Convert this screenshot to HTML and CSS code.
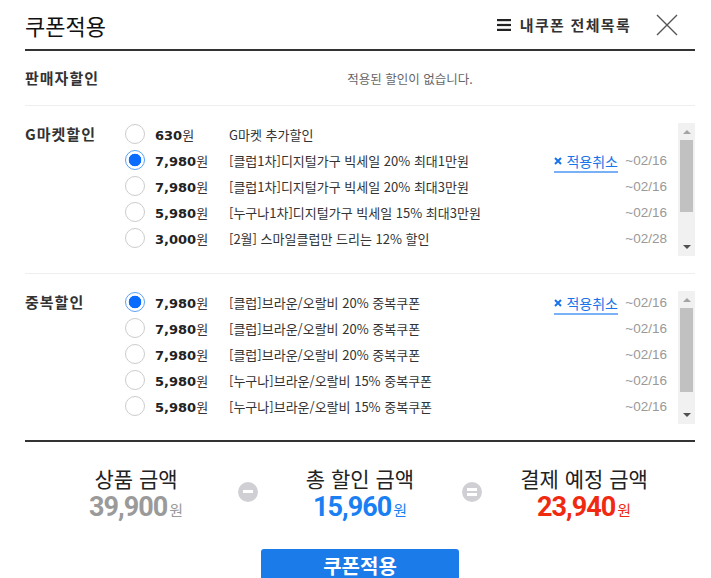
FILE: index.html
```html
<!DOCTYPE html>
<html lang="ko">
<head>
  <meta charset="UTF-8">
  <title>쿠폰적용</title>
  <link rel="stylesheet" href="styles.css">
</head>
<body>
  <div class="popup">
    <div class="header">
      <h1 class="title">쿠폰적용</h1>
      <a class="my-coupons" href="#">
        <svg class="menu-icon" width="14" height="12" viewBox="0 0 14 12"><rect x="0" y="0" width="14" height="2.2" fill="#222"/><rect x="0" y="4.9" width="14" height="2.2" fill="#222"/><rect x="0" y="9.8" width="14" height="2.2" fill="#222"/></svg>
        내쿠폰 전체목록
      </a>
      <a class="close" href="#">
        <svg width="22" height="22" viewBox="0 0 22 22"><path d="M1 1 L21 21 M21 1 L1 21" stroke="#555" stroke-width="1.4" fill="none"/></svg>
      </a>
    </div>

    <div class="seller-row">
      <div class="sec-label">판매자할인</div>
      <div class="empty">적용된 할인이 없습니다.</div>
    </div>

    <div class="coupon-sec">
      <div class="sec-label">G마켓할인</div>
      <ul class="coupon-list">
        <li class="coupon-row">
          <input type="radio" class="radio" name="gmarket">
          <span class="amount"><b>630</b>원</span>
          <span class="desc">G마켓 추가할인</span>
          <span class="date"></span>
        </li>
        <li class="coupon-row">
          <input type="radio" class="radio" name="gmarket" checked>
          <span class="amount"><b>7,980</b>원</span>
          <span class="desc">[클럽1차]디지털가구 빅세일 20% 최대1만원</span>
          <a class="cancel" href="#"><svg class="x" width="8" height="8" viewBox="0 0 8 8"><path d="M1 1 L7 7 M7 1 L1 7" stroke="#1a73e8" stroke-width="2" fill="none"/></svg>적용취소</a>
          <span class="date">~02/16</span>
        </li>
        <li class="coupon-row">
          <input type="radio" class="radio" name="gmarket">
          <span class="amount"><b>7,980</b>원</span>
          <span class="desc">[클럽1차]디지털가구 빅세일 20% 최대3만원</span>
          <span class="date">~02/16</span>
        </li>
        <li class="coupon-row">
          <input type="radio" class="radio" name="gmarket">
          <span class="amount"><b>5,980</b>원</span>
          <span class="desc">[누구나1차]디지털가구 빅세일 15% 최대3만원</span>
          <span class="date">~02/16</span>
        </li>
        <li class="coupon-row">
          <input type="radio" class="radio" name="gmarket">
          <span class="amount"><b>3,000</b>원</span>
          <span class="desc">[2월] 스마일클럽만 드리는 12% 할인</span>
          <span class="date">~02/28</span>
        </li>
      </ul>
      <div class="scrollbar">
        <span class="arrow-up off"></span>
        <span class="thumb thumb-g"></span>
        <span class="arrow-down"></span>
      </div>
    </div>

    <div class="coupon-sec last">
      <div class="sec-label">중복할인</div>
      <ul class="coupon-list">
        <li class="coupon-row">
          <input type="radio" class="radio" name="dup" checked>
          <span class="amount"><b>7,980</b>원</span>
          <span class="desc">[클럽]브라운/오랄비 20% 중복쿠폰</span>
          <a class="cancel" href="#"><svg class="x" width="8" height="8" viewBox="0 0 8 8"><path d="M1 1 L7 7 M7 1 L1 7" stroke="#1a73e8" stroke-width="2" fill="none"/></svg>적용취소</a>
          <span class="date">~02/16</span>
        </li>
        <li class="coupon-row">
          <input type="radio" class="radio" name="dup">
          <span class="amount"><b>7,980</b>원</span>
          <span class="desc">[클럽]브라운/오랄비 20% 중복쿠폰</span>
          <span class="date">~02/16</span>
        </li>
        <li class="coupon-row">
          <input type="radio" class="radio" name="dup">
          <span class="amount"><b>7,980</b>원</span>
          <span class="desc">[클럽]브라운/오랄비 20% 중복쿠폰</span>
          <span class="date">~02/16</span>
        </li>
        <li class="coupon-row">
          <input type="radio" class="radio" name="dup">
          <span class="amount"><b>5,980</b>원</span>
          <span class="desc">[누구나]브라운/오랄비 15% 중복쿠폰</span>
          <span class="date">~02/16</span>
        </li>
        <li class="coupon-row">
          <input type="radio" class="radio" name="dup">
          <span class="amount"><b>5,980</b>원</span>
          <span class="desc">[누구나]브라운/오랄비 15% 중복쿠폰</span>
          <span class="date">~02/16</span>
        </li>
      </ul>
      <div class="scrollbar">
        <span class="arrow-up off"></span>
        <span class="thumb thumb-d"></span>
        <span class="arrow-down"></span>
      </div>
    </div>

    <div class="summary">
      <div class="sum-col">
        <div class="sum-label">상품 금액</div>
        <div class="sum-value gray">39,900<small>원</small></div>
      </div>
      <span class="op minus"></span>
      <div class="sum-col">
        <div class="sum-label">총 할인 금액</div>
        <div class="sum-value blue">15,960<small>원</small></div>
      </div>
      <span class="op equals"></span>
      <div class="sum-col">
        <div class="sum-label">결제 예정 금액</div>
        <div class="sum-value red">23,940<small>원</small></div>
      </div>
    </div>

    <button class="apply-btn" type="button">쿠폰적용</button>
  </div>
</body>
</html>
```

FILE: styles.css
```css
body { margin: 0; background: #fff; color: #333; font-family: "Noto Sans CJK KR", sans-serif; }
a { text-decoration: none; color: inherit; }
.popup { padding: 0 16px 0 25px; }

.header { display: flex; align-items: center; height: 49px; border-bottom: 2px solid #333; }
.title { margin: 0; font-size: 22px; font-weight: 400; color: #111; }
.my-coupons { margin-left: auto; display: flex; align-items: center; gap: 9px; font-size: 15px; font-weight: bold; letter-spacing: 1.3px; color: #333; }
.close { display: flex; margin-left: 25px; margin-right: 17px; }

.seller-row { display: flex; align-items: center; height: 54px; border-bottom: 1px solid #eee; }
.sec-label { width: 100px; flex-shrink: 0; font-size: 15px; font-weight: bold; letter-spacing: 1px; line-height: 26px; color: #333; }
.empty { flex: 1; text-align: center; font-size: 12.5px; color: #666; }

.coupon-sec { display: flex; align-items: flex-start; padding: 15px 0 17px; border-bottom: 1px solid #eee; }
.coupon-sec.last { padding-bottom: 16px; border-bottom: 2px solid #333; }
.coupon-list { flex: 1; list-style: none; margin: 0; padding: 0 11px 0 0; }
.coupon-row { display: flex; align-items: center; height: 26px; }
.radio { appearance: none; -webkit-appearance: none; margin: 0; width: 20px; height: 20px; border: 1px solid #ccc; border-radius: 50%; background: #fff; flex-shrink: 0; }
.radio:checked { border-color: #5aa2f5; background: radial-gradient(circle, #0a6cff 0, #0a6cff 6px, #fff 6.6px); }
.amount { width: 74px; margin-left: 10px; flex-shrink: 0; font-size: 13px; color: #333; }
.amount b { font-family: "DejaVu Sans", sans-serif; font-size: 13px; color: #222; }
.desc { flex: 1; font-size: 13px; color: #333; white-space: nowrap; }
.cancel { display: inline-flex; align-items: center; gap: 4px; margin-right: 7px; margin-top: 3px; font-size: 14px; line-height: 20px; color: #1a73e8; border-bottom: 2px solid #7ab0f5; }
.date { width: 42px; text-align: right; font-family: "Liberation Sans", sans-serif; font-size: 13.5px; color: #999; }

.scrollbar { width: 17px; height: 133px; margin-top: 2px; background: #f1f1f1; display: flex; flex-direction: column; align-items: center; flex-shrink: 0; }
.arrow-up, .arrow-down { width: 0; height: 0; border-left: 4px solid transparent; border-right: 4px solid transparent; }
.arrow-up { margin-top: 7px; border-bottom: 4px solid #505050; }
.arrow-up.off { border-bottom-color: #a3a3a3; }
.arrow-down { margin-top: auto; margin-bottom: 7px; border-top: 4px solid #505050; }
.thumb { width: 13px; background: #c1c1c1; margin-top: 6px; }
.thumb-g { height: 72px; }
.thumb-d { height: 84px; }

.summary { display: flex; justify-content: center; align-items: center; gap: 22px; padding-top: 22px; }
.sum-col { width: 160px; text-align: center; }
.sum-label { font-size: 21px; line-height: 28px; color: #222; }
.sum-value { font-family: Roboto, sans-serif; font-weight: bold; font-size: 27px; line-height: 30px; letter-spacing: -1px; }
.sum-value small { font-family: "Noto Sans CJK KR", sans-serif; font-size: 15px; font-weight: normal; letter-spacing: 0; margin-left: 2px; }
.gray { color: #9a9a9a; }
.blue { color: #1a7ff2; }
.red { color: #ef2a10; }
.op { position: relative; width: 20px; height: 20px; border-radius: 50%; background: #cfcfd4; margin-bottom: 6px; flex-shrink: 0; }
.op::before, .op::after { content: ""; position: absolute; left: 5px; width: 10px; height: 3px; background: #fff; }
.minus::before { top: 8.5px; }
.minus::after { display: none; }
.equals::before { top: 6px; }
.equals::after { top: 11px; }

.apply-btn { display: block; width: 198px; height: 50px; margin: 24px auto 0; border: 0; border-radius: 3px; background: #1b7be8; color: #fff; font-family: "Noto Sans CJK KR", sans-serif; font-size: 20px; font-weight: bold; padding: 0 0 18px; }
```
